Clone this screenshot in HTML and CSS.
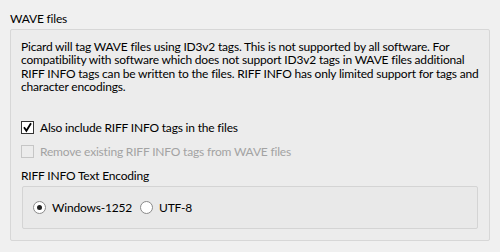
FILE: index.html
```html
<!DOCTYPE html>
<html>
<head>
<meta charset="utf-8">
<link rel="stylesheet" href="styles.css">
</head>
<body>
<div class="page">
  <div class="group-title">WAVE files</div>
  <div class="group">
    <p class="desc">Picard will tag WAVE files using ID3v2 tags. This is not supported by all software. For compatibility with software which does not support ID3v2 tags in WAVE files additional RIFF INFO tags can be written to the files. RIFF INFO has only limited support for tags and character encodings.</p>
    <div class="check-row">
      <span class="checkbox checked"><svg width="11" height="11" viewBox="0 0 11 11"><path d="M2 5.3 L4.4 8.8 L9 1.2" fill="none" stroke="#000" stroke-width="1.8"/></svg></span>
      <span class="label">Also include RIFF INFO tags in the files</span>
    </div>
    <div class="check-row disabled">
      <span class="checkbox"></span>
      <span class="label">Remove existing RIFF INFO tags from WAVE files</span>
    </div>
    <div class="sub-title">RIFF INFO Text Encoding</div>
    <div class="subgroup">
      <div class="radio-row">
        <span class="radio on"></span><span class="label">Windows-1252</span>
      </div>
      <div class="radio-row">
        <span class="radio"></span><span class="label">UTF-8</span>
      </div>
    </div>
  </div>
</div>
</body>
</html>
```
FILE: styles.css
```css
html, body {
  margin: 0;
  padding: 0;
  background: #f0f0f0;
}
body {
  font-family: "Lato", "Noto Sans", sans-serif;
  font-size: 12px;
  letter-spacing: -0.19px;
  color: #000;
  width: 500px;
  height: 252px;
  overflow: hidden;
}
.page {
  padding: 10px 10px 0 10px;
}
.group-title {
  line-height: 17px;
  height: 19px;
}
.group {
  width: 478px;
  height: 210px;
  border: 1px solid #d7d7d7;
  border-radius: 2px;
  background: #ececec;
}
.desc {
  margin: 0;
  padding: 10px 10px 0 10px;
  line-height: 13.3px;
}
.check-row {
  display: flex;
  align-items: center;
  gap: 6px;
  padding-left: 10px;
  height: 13px;
  margin-top: 27.5px;
}
.check-row.disabled {
  margin-top: 11px;
  color: #a3a3a3;
}
.checkbox {
  width: 11px;
  height: 11px;
  border: 1px solid #333;
  background: #fff;
  display: flex;
  align-items: center;
  justify-content: center;
}
.disabled .checkbox {
  border-color: #c6c6c6;
  background: #ececec;
}
.sub-title {
  padding-left: 10px;
  margin-top: 11px;
  line-height: 14px;
}
.subgroup {
  margin: 3px 11px 0 11px;
  height: 41px;
  border: 1px solid #d4d4d4;
  border-radius: 2px;
  background: #e9e9e9;
  display: flex;
  align-items: center;
  padding-left: 10px;
  gap: 8px;
}
.radio-row {
  display: flex;
  align-items: center;
  gap: 6px;
}
.radio {
  width: 11px;
  height: 11px;
  border: 1px solid #8a8a8a;
  border-radius: 50%;
  background: #fff;
  display: flex;
  align-items: center;
  justify-content: center;
}
.radio.on::after {
  content: "";
  width: 5px;
  height: 5px;
  border-radius: 50%;
  background: #222;
}
```
